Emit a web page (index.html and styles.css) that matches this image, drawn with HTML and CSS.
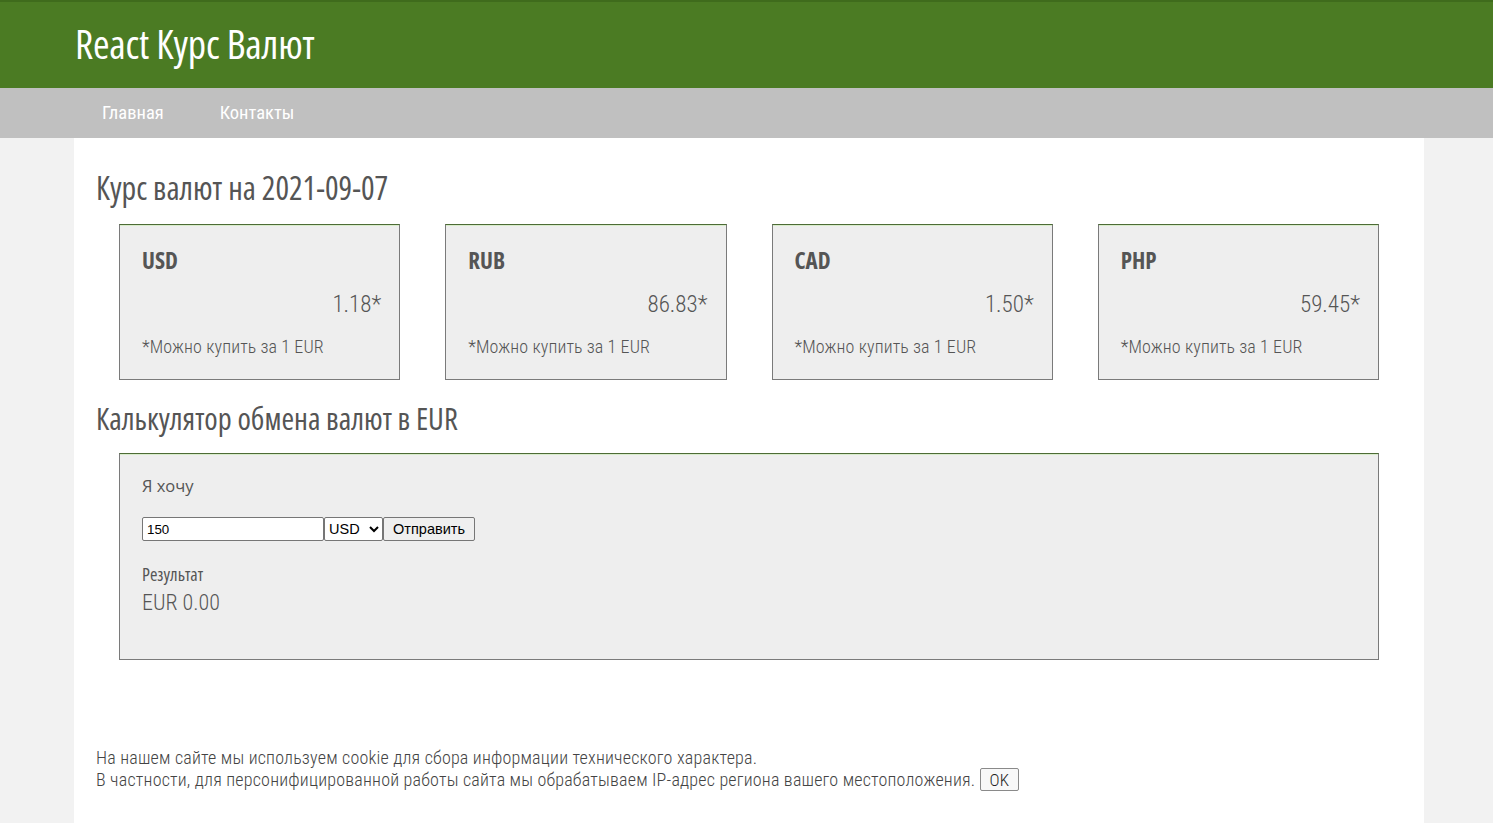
FILE: index.html
```html
<!DOCTYPE html>
<html lang="ru">
<head>
<meta charset="utf-8">
<title>React Курс Валют</title>
<link rel="stylesheet" href="styles.css">
</head>
<body>
<header class="header">
  <div class="header-inner">
    <h1 class="logo">React Курс Валют</h1>
  </div>
</header>
<nav class="nav">
  <div class="nav-inner">
    <a class="nav-link" href="#">Главная</a>
    <a class="nav-link" href="#">Контакты</a>
  </div>
</nav>
<main class="content">
  <h2 class="title">Курс валют на 2021-09-07</h2>
  <div class="cards">
    <div class="card">
      <div class="card-code">USD</div>
      <div class="card-rate">1.18*</div>
      <div class="card-note">*Можно купить за 1 EUR</div>
    </div>
    <div class="card">
      <div class="card-code">RUB</div>
      <div class="card-rate">86.83*</div>
      <div class="card-note">*Можно купить за 1 EUR</div>
    </div>
    <div class="card">
      <div class="card-code">CAD</div>
      <div class="card-rate">1.50*</div>
      <div class="card-note">*Можно купить за 1 EUR</div>
    </div>
    <div class="card">
      <div class="card-code">PHP</div>
      <div class="card-rate">59.45*</div>
      <div class="card-note">*Можно купить за 1 EUR</div>
    </div>
  </div>
  <h2 class="title title-calc">Калькулятор обмена валют в EUR</h2>
  <div class="calc">
    <div class="calc-label">Я хочу</div>
    <form class="calc-form">
      <input class="calc-input" type="text" value="150"><select class="calc-select"><option>USD</option><option>RUB</option><option>CAD</option><option>PHP</option></select><button class="calc-btn" type="button">Отправить</button>
    </form>
    <div class="calc-result-title">Результат</div>
    <div class="calc-result">EUR 0.00</div>
  </div>
  <div class="cookie">
    <div>На нашем сайте мы используем cookie для сбора информации технического характера.</div>
    <div>В частности, для персонифицированной работы сайта мы обрабатываем IP-адрес региона вашего местоположения. <button class="cookie-btn" type="button">OK</button></div>
  </div>
</main>
</body>
</html>
```
FILE: styles.css
```css
html, body {
  margin: 0;
  padding: 0;
}
body {
  background: #f2f2f2;
  font-family: "Roboto Condensed", Roboto, sans-serif;
  font-stretch: condensed;
  font-weight: 300;
  color: #555;
  min-height: 823px;
}
.header {
  background: #4b7b23;
  border-top: 2px solid #3f6b1c;
  height: 86px;
}
.header-inner {
  padding-left: 75px;
}
.logo {
  margin: 0;
  font-family: "Open Sans", sans-serif;
  font-stretch: 75%;
  font-weight: 500;
  font-size: 40px;
  line-height: 84px;
  color: #fff;
  letter-spacing: -0.2px;
}
.nav {
  background: #c0c0c0;
  height: 50px;
}
.nav-inner {
  display: flex;
  padding-left: 102px;
  gap: 56px;
}
.nav-link {
  color: #fff;
  text-decoration: none;
  font-size: 18.5px;
  font-weight: 400;
  line-height: 50px;
}
.content {
  background: #fff;
  margin: 0 69px 0 74px;
  padding: 30px 22px 32px;
  min-height: 700px;
  box-sizing: border-box;
}
.title {
  margin: 0;
  font-family: "Open Sans", sans-serif;
  font-stretch: 75%;
  font-weight: 500;
  font-size: 32px;
  line-height: 40px;
  color: #555;
}
.title-calc {
  font-size: 30.5px;
  margin-top: 18px;
}
.cards {
  display: flex;
  gap: 45px;
  margin: 16px 23px 0;
}
.card {
  flex: 1;
  height: 156px;
  box-sizing: border-box;
  background: #eee;
  border: 1px solid #7a7a7a;
  border-top-color: #4d6b36;
  box-shadow: inset 0 1px 0 #d8eccb;
  padding: 20px 18px 0 22px;
}
.card-code {
  font-family: "Open Sans", sans-serif;
  font-stretch: 75%;
  font-weight: 700;
  font-size: 23px;
  line-height: 30px;
  color: #555;
}
.card-rate {
  text-align: right;
  font-size: 23px;
  line-height: 28px;
  margin-top: 16px;
}
.card-note {
  font-size: 18px;
  letter-spacing: 0.1px;
  line-height: 22px;
  margin-top: 17px;
}
.calc {
  margin: 15px 23px 0;
  height: 207px;
  box-sizing: border-box;
  background: #eee;
  border: 1px solid #7a7a7a;
  border-top-color: #4d6b36;
  box-shadow: inset 0 1px 0 #d8eccb;
  padding: 22px 22px 0;
}
.calc-label {
  font-family: "Open Sans", sans-serif;
  font-stretch: 100%;
  font-weight: 400;
  font-size: 16.5px;
  line-height: 20px;
  color: #555;
}
.calc-form {
  display: flex;
  align-items: stretch;
  margin-top: 21px;
  height: 24px;
}
.calc-input {
  width: 182px;
  box-sizing: border-box;
  margin: 0;
  padding: 1px 4px;
  font-family: "Liberation Sans", Arial, sans-serif;
  font-size: 13.33px;
  border: 1px solid #767676;
  border-radius: 2px;
  background: #fff;
  color: #000;
}
.calc-select {
  width: 59px;
  box-sizing: border-box;
  margin: 0;
  font-family: "Liberation Sans", Arial, sans-serif;
  font-size: 14.5px;
  border: 1px solid #767676;
  border-radius: 2px;
  background: #fff;
  color: #000;
}
.calc-btn {
  width: 92px;
  box-sizing: border-box;
  margin: 0;
  font-family: "Liberation Sans", Arial, sans-serif;
  font-size: 14.5px;
  border: 1px solid #767676;
  border-radius: 2px;
  background: #efefef;
  color: #000;
  padding: 0 6px;
}
.calc-result-title {
  margin-top: 21px;
  font-family: "Open Sans", sans-serif;
  font-stretch: 75%;
  font-weight: 500;
  font-size: 18px;
  line-height: 24px;
  color: #555;
}
.calc-result {
  font-size: 22px;
  line-height: 28px;
  margin-top: 3px;
}
.cookie {
  margin-top: 88px;
  font-size: 18px;
  letter-spacing: 0.2px;
  line-height: 20px;
  color: #444;
}
.cookie-btn {
  font-family: "Roboto Condensed", Roboto, sans-serif;
  font-stretch: condensed;
  font-weight: 300;
  font-size: 17px;
  color: #222;
  background: #f8f8f8;
  border: 1px solid #8a8a8a;
  border-radius: 2px;
  padding: 1px 9px;
  height: 23px;
  vertical-align: baseline;
}
```
